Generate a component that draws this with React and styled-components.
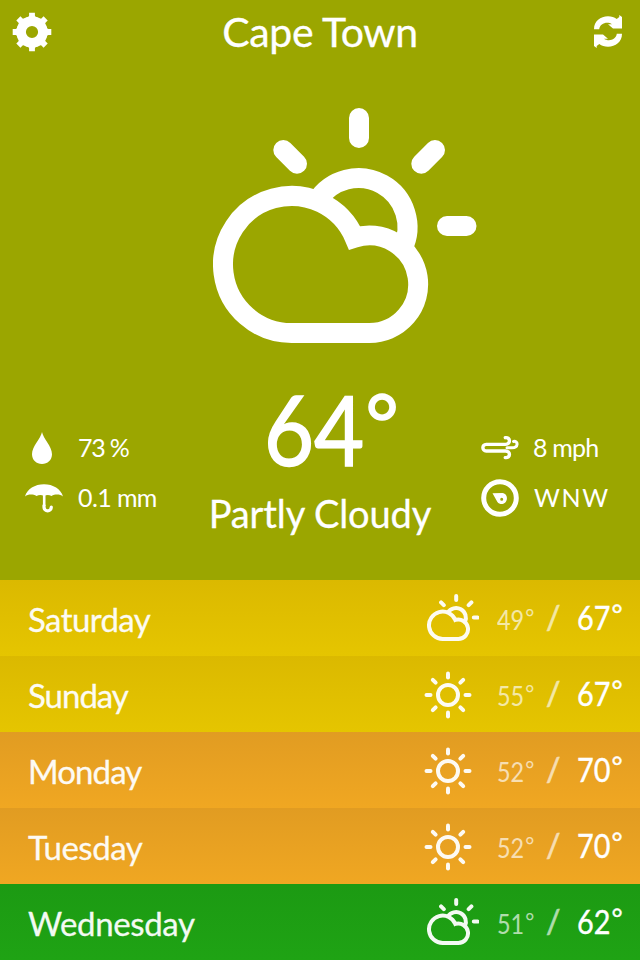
import styled, { createGlobalStyle } from "styled-components";

const days = [
  { name: "Saturday", icon: "cloud", low: 49, high: 67, tone: "yellow", spacing: "-0.6px" },
  { name: "Sunday", icon: "sun", low: 55, high: 67, tone: "yellow", spacing: "-1px" },
  { name: "Monday", icon: "sun", low: 52, high: 70, tone: "orange", spacing: "-0.9px" },
  { name: "Tuesday", icon: "sun", low: 52, high: 70, tone: "orange", spacing: "-0.5px" },
  { name: "Wednesday", icon: "cloud", low: 51, high: 62, tone: "green", spacing: "-0.35px" },
];

const tones = {
  yellow: ["#dbb900", "#e5c500"],
  orange: ["#e19c22", "#f0a722"],
  green: ["#1c9a13", "#1fa314"],
};

function PartlyCloudy({ width, height }) {
  return (
    <svg width={width} height={height} viewBox="213 108 264 235" fill="none" stroke="currentColor" strokeWidth="20">
      <path d="M317 201 A49 49 0 0 1 402.5 248.6" />
      <path
        strokeMiterlimit="10"
        d="M354.6 237.8 A68.5 68.5 0 1 0 291.5 333 H369.25 A48.75 48.75 0 1 0 354.6 237.8 Z"
      />
      <path strokeLinecap="round" d="M359 118V138M447 226H466.5M435 150L421.3 163.7M283.3 150L297 163.7" />
    </svg>
  );
}

function Sun() {
  return (
    <svg width="48" height="48" viewBox="-24 -24 48 48" fill="none" stroke="currentColor" strokeWidth="4">
      <circle r="10" />
      {[0, 45, 90, 135, 180, 225, 270, 315].map((angle) => (
        <path key={angle} d="M0 -17.5V-21.5" strokeLinecap="round" transform={`rotate(${angle})`} />
      ))}
    </svg>
  );
}

function Gear() {
  return (
    <svg width="40" height="40" viewBox="-20 -20 40 40">
      <circle r="10.9" fill="none" stroke="currentColor" strokeWidth="9.6" />
      {[0, 45, 90, 135, 180, 225, 270, 315].map((angle) => (
        <path
          key={angle}
          d="M-6.4 -14C-4.4 -14.5 -2.9 -15 -2.9 -16.5V-19.3H2.9V-16.5C2.9 -15 4.4 -14.5 6.4 -14Z"
          fill="currentColor"
          transform={`rotate(${angle})`}
        />
      ))}
    </svg>
  );
}

function Refresh() {
  const arrow = "M0 14.2C0 6 6.5 1.2 14 1.2C17.5 1.2 20.3 2.2 22.7 4L25.3 2V0L28 2V13.5H19L14 9.3H18C13 6 6 8.5 5.2 14.2Z";
  return (
    <svg width="28" height="34" viewBox="0 0 28 34" fill="currentColor">
      <path d={arrow} />
      <path d={arrow} transform="rotate(180 14 16.5)" />
    </svg>
  );
}

function Drop() {
  return (
    <svg width="20" height="32" viewBox="0 0 20 32" fill="currentColor">
      <path d="M10 0C11 6 20 14.5 20 22.2C20 28 15.5 32 10 32S0 28 0 22.2C0 14.5 9 6 10 0Z" />
    </svg>
  );
}

function Umbrella() {
  return (
    <svg width="38" height="29" viewBox="0 0 38 29">
      <path
        fill="currentColor"
        d="M0 12.5C2 5 10 .3 19 .3S36 5 38 12.5C35 10 30 10 26.5 12C24 10.5 21.5 10.5 19 12C16.5 10.5 14 10.5 11.5 12C8 10 3 10 0 12.5Z"
      />
      <path fill="none" stroke="currentColor" strokeWidth="2.6" d="M19.2 10V22" />
      <path
        fill="none"
        stroke="currentColor"
        strokeWidth="3.2"
        strokeLinecap="round"
        d="M19 21.5V23C19 28.2 26.3 28.2 26.3 23"
      />
    </svg>
  );
}

function Wind() {
  return (
    <svg width="38" height="26" viewBox="0 0 38 26" fill="none" stroke="currentColor" strokeWidth="3.4" strokeLinecap="round">
      <path d="M24.3 2.7C29.5 1.7 30 9.4 24.5 9.4H5.2C.8 9.4 .8 16 5.2 16H24.5C30 16 29.5 23.4 24.3 22.6" />
      <path d="M26 12.8H31C37.5 12.8 37.5 5.8 32.5 6.4" strokeWidth="3" />
    </svg>
  );
}

function Compass() {
  return (
    <svg width="38" height="38" viewBox="0 0 38 38">
      <circle cx="19" cy="19" r="16.3" fill="none" stroke="currentColor" strokeWidth="5" />
      <path
        fill="currentColor"
        fillRule="evenodd"
        d="M11.5 14.2L21.5 14C24.5 14.5 26.3 17 25.9 20C25.5 23.3 22.5 25.6 19.5 25C17.8 24.7 16.6 23.5 15.7 21.8ZM20.7 18.7A1.5 1.5 0 1 0 20.7 21.7A1.5 1.5 0 1 0 20.7 18.7Z"
      />
    </svg>
  );
}

function App() {
  return (
    <Screen>
      <GlobalStyle />
      <Current>
        <Header>
          <Gear />
          <City>Cape Town</City>
          <Refresh />
        </Header>

        <Hero>
          <PartlyCloudy width={264} height={235} />
        </Hero>

        <Details>
          <Stats>
            <Stat $shift>
              <Drop />
              <StatValue $spacing="-1.2px">73 %</StatValue>
            </Stat>
            <Stat>
              <Umbrella />
              <StatValue $spacing="-0.6px">0.1 mm</StatValue>
            </Stat>
          </Stats>

          <Summary>
            <Temperature>
              <Digits>64</Digits>
              <BigDegree>°</BigDegree>
            </Temperature>
            <Condition>Partly Cloudy</Condition>
          </Summary>

          <Stats $right>
            <Stat>
              <Wind />
              <StatValue $left="-1px" $spacing="-0.8px">8 mph</StatValue>
            </Stat>
            <Stat>
              <Compass />
              <StatValue $spacing="1.6px">WNW</StatValue>
            </Stat>
          </Stats>
        </Details>
      </Current>

      {days.map((day) => (
        <Day key={day.name} $tone={day.tone}>
          <DayName $spacing={day.spacing}>{day.name}</DayName>
          <DayIcon $cloud={day.icon === "cloud"}>
            {day.icon === "sun" ? <Sun /> : <PartlyCloudy width={52.8} height={47} />}
          </DayIcon>
          <Low>
            <Digits>{day.low}</Digits>
            <Degree>°</Degree>
          </Low>
          <Slash>/</Slash>
          <High>
            <Digits>{day.high}</Digits>
            <Degree>°</Degree>
          </High>
        </Day>
      ))}
    </Screen>
  );
}

const GlobalStyle = createGlobalStyle`
  * {
    box-sizing: border-box;
  }

  body {
    margin: 0;
    background: #9ba600;
  }

  svg {
    display: block;
    flex-shrink: 0;
  }
`;

const Screen = styled.div`
  width: 640px;
  height: 960px;
  overflow: hidden;
  color: #fff;
  font-family: Lato, "Open Sans", sans-serif;
  line-height: 1;
  white-space: nowrap;
`;

const Current = styled.section`
  display: flex;
  flex-direction: column;
  height: 580px;
  background: #9ba600;
`;

const Header = styled.header`
  display: flex;
  align-items: center;
  justify-content: space-between;
  height: 64px;
  padding: 0 18px 0 12px;
`;

const City = styled.h1`
  margin: 0;
  padding: 0 6px 2px 0;
  font-size: 41px;
  font-weight: 400;
  letter-spacing: -0.4px;
  -webkit-text-stroke: 0.3px #fff;
`;

const Hero = styled.div`
  display: flex;
  padding: 44px 0 0 213px;
`;

const Details = styled.div`
  display: grid;
  grid-template-columns: 200px 240px 200px;
  margin-top: 38px;
`;

const Stats = styled.div`
  padding: ${(p) => (p.$right ? "42px 0 0 41px" : "42px 0 0 25px")};
`;

const Stat = styled.div`
  display: grid;
  grid-template-columns: 38px 1fr;
  align-items: center;
  justify-items: center;
  column-gap: 14px;
  height: 50px;

  svg {
    margin-right: ${(p) => (p.$shift ? "4px" : "0")};
  }
`;

const StatValue = styled.span`
  justify-self: start;
  margin-left: ${(p) => p.$left || "0"};
  padding: 0 0 2px 1px;
  font-size: 25px;
  letter-spacing: ${(p) => p.$spacing};
`;

const Summary = styled.div`
  display: flex;
  flex-direction: column;
  align-items: center;
`;

// narrows the numerals without touching their height
const Digits = styled.span`
  margin-right: -0.115em;
  transform: scaleX(0.9);
  transform-origin: left;
`;

const Temperature = styled.div`
  display: flex;
  height: 96px;
  padding-left: 23px;
  font-size: 96px;
  -webkit-text-stroke: 1.6px #fff;
`;

const BigDegree = styled.span`
  margin: 0 0 0 1px;
  font-size: 80px;
`;

const Condition = styled.div`
  margin-top: 17px;
  font-size: 38px;
  letter-spacing: -0.1px;
  -webkit-text-stroke: 0.3px #fff;
`;

const Day = styled.div`
  display: grid;
  grid-template-columns: 396px 73px 49px 31px 63px;
  align-items: center;
  height: 76px;
  padding-left: 28px;
  background: linear-gradient(${(p) => tones[p.$tone].join(", ")});
`;

const DayName = styled.span`
  padding-top: 2px;
  font-size: 33px;
  letter-spacing: ${(p) => p.$spacing};
  opacity: 0.95;
  -webkit-text-stroke: 0.3px #fff;
`;

const DayIcon = styled.div`
  padding: ${(p) => (p.$cloud ? "0 0 1px 2.5px" : "2px 0 0 0")};
  opacity: 0.95;
`;

const Low = styled.span`
  display: flex;
  padding-top: 4px;
  font-size: 26px;
  opacity: 0.65;
`;

const Slash = styled.span`
  padding-bottom: 3px;
  font-size: 32px;
  opacity: 0.65;
  -webkit-text-stroke: 0.6px #fff;
`;

const High = styled.span`
  display: flex;
  padding-bottom: 1px;
  font-size: 32px;
  -webkit-text-stroke: 0.4px #fff;
`;

const Degree = styled.span`
  margin: -1px 0 0 1px;
  font-size: 0.84em;
`;

export default App;
